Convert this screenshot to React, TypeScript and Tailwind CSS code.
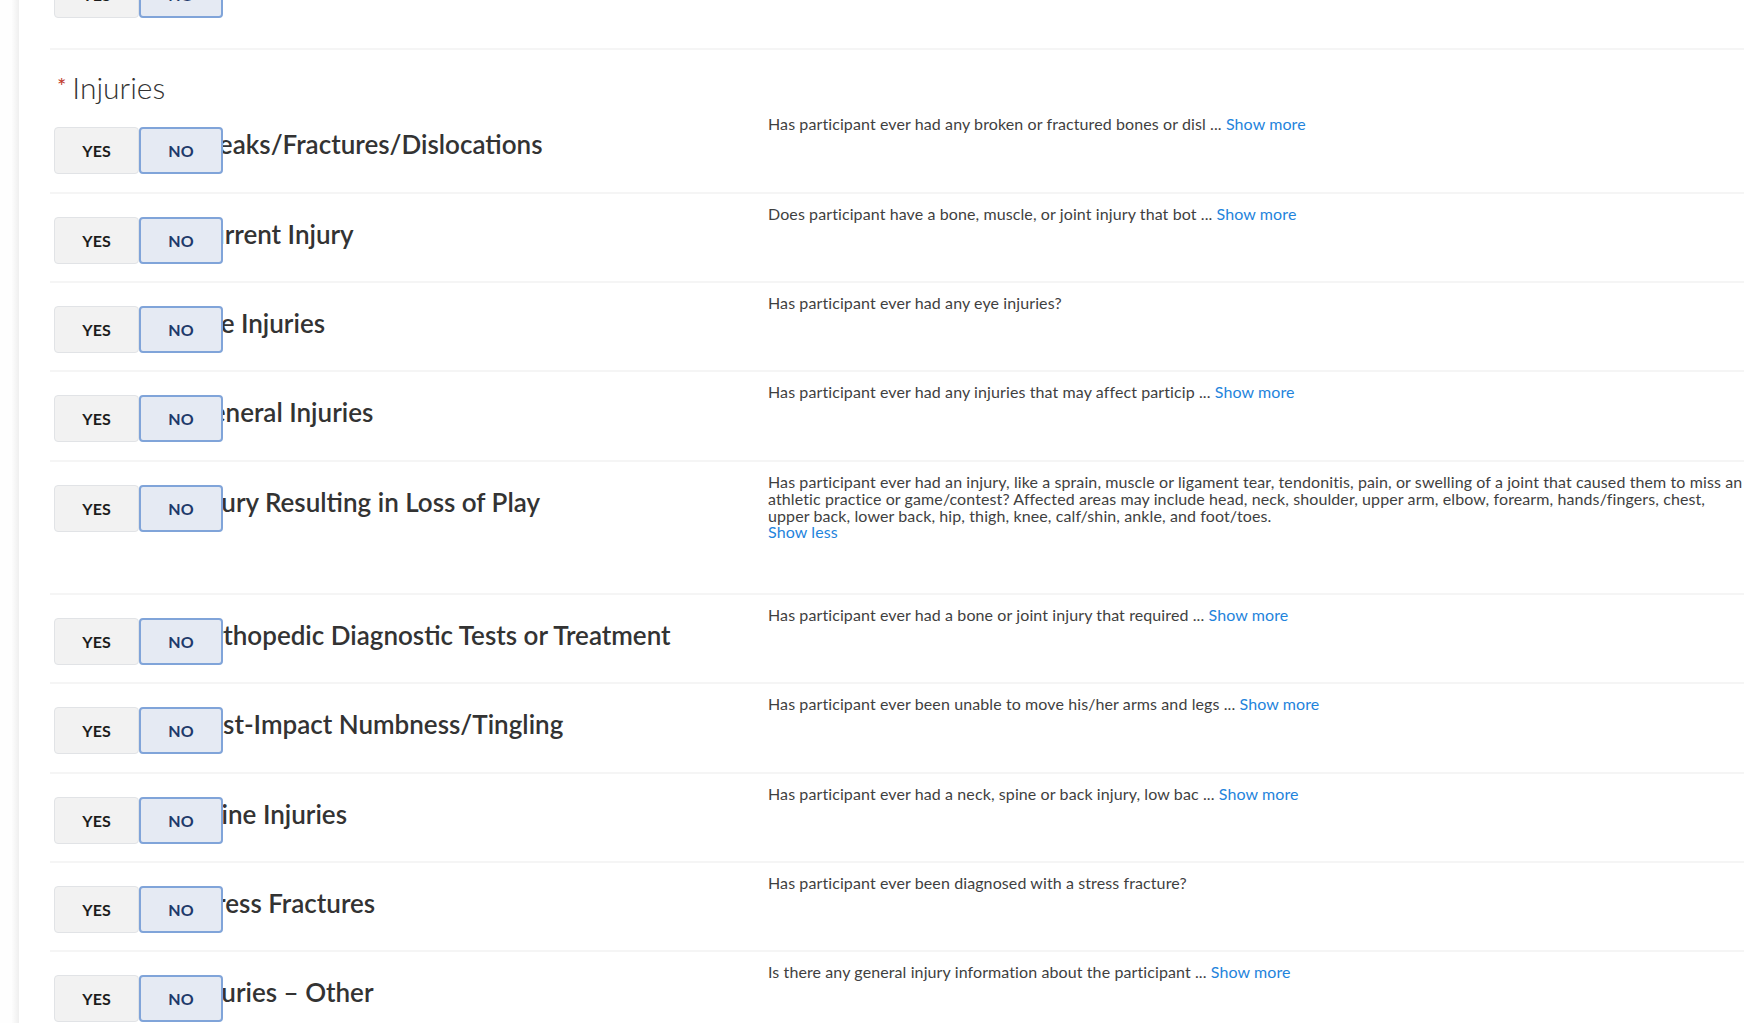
import React from 'react';

type Row = {
  title: string;
  text: string[];
  more?: 'more' | 'less';
  h: string;
};

const rows: Row[] = [
  { title: 'Breaks/Fractures/Dislocations', text: ['Has participant ever had any broken or fractured bones or disl'], more: 'more', h: 'h-[90px]' },
  { title: 'Current Injury', text: ['Does participant have a bone, muscle, or joint injury that bot'], more: 'more', h: 'h-[89px]' },
  { title: 'Eye Injuries', text: ['Has participant ever had any eye injuries?'], h: 'h-[89px]' },
  { title: 'General Injuries', text: ['Has participant ever had any injuries that may affect particip'], more: 'more', h: 'h-[90px]' },
  {
    title: 'Injury Resulting in Loss of Play',
    text: [
      'Has participant ever had an injury, like a sprain, muscle or ligament tear, tendonitis, pain, or swelling of a joint that caused them to miss an',
      'athletic practice or game/contest? Affected areas may include head, neck, shoulder, upper arm, elbow, forearm, hands/fingers, chest,',
      'upper back, lower back, hip, thigh, knee, calf/shin, ankle, and foot/toes.',
    ],
    more: 'less',
    h: 'h-[133px]',
  },
  { title: 'Orthopedic Diagnostic Tests or Treatment', text: ['Has participant ever had a bone or joint injury that required'], more: 'more', h: 'h-[89px]' },
  { title: 'Post-Impact Numbness/Tingling', text: ['Has participant ever been unable to move his/her arms and legs'], more: 'more', h: 'h-[90px]' },
  { title: 'Spine Injuries', text: ['Has participant ever had a neck, spine or back injury, low bac'], more: 'more', h: 'h-[89px]' },
  { title: 'Stress Fractures', text: ['Has participant ever been diagnosed with a stress fracture?'], h: 'h-[89px]' },
  { title: 'Injuries – Other', text: ['Is there any general injury information about the participant'], more: 'more', h: 'h-[89px]' },
];

function YesNo({ className }: { className: string }) {
  return (
    <div className={`absolute left-[4px] z-10 flex ${className}`}>
      <button className="flex h-[47px] w-[85px] items-center justify-center rounded-[4px] border border-[#e1e3e6] bg-[#f2f2f2] text-[16px] font-bold text-[#1c1c1c]">
        YES
      </button>
      <button className="flex h-[47px] w-[84px] items-center justify-center rounded-[4px] border-2 border-[#80a4d9] bg-[#e5eaf3] text-[16px] font-bold text-[#1e3a6b]">
        NO
      </button>
    </div>
  );
}

function QuestionRow({ row }: { row: Row }) {
  return (
    <div className={`relative flex border-b-2 border-[#f5f5f5] ${row.h}`}>
      <YesNo className="top-[23px]" />
      <div className="w-[718px] shrink-0 whitespace-nowrap pl-[143px] pt-[25px] text-[26px] font-semibold leading-[30px] text-[#333333]">
        {row.title}
      </div>
      <div className="flex-1 pt-[11px] text-[16px] leading-[17px] tracking-[0.1px] text-[#3f3f3f]">
        {row.more === 'less' ? (
          <>
            {row.text.map((line) => (
              <p key={line} className="whitespace-nowrap">
                {line}
              </p>
            ))}
            <a className="block leading-[16px] text-[#1f84dc]">Show less</a>
          </>
        ) : (
          <p>
            {row.text[0]}
            {row.more && (
              <>
                {' ... '}
                <a className="text-[#1f84dc]">Show more</a>
              </>
            )}
          </p>
        )}
      </div>
    </div>
  );
}

export default function App() {
  return (
    <div className="flex h-screen overflow-hidden bg-white font-[Lato,sans-serif]">
      <div className="w-[19px] shrink-0 bg-linear-to-r from-[#fefefe] from-60% to-[#efefef]" />
      <div className="flex-1 pl-[31px] pr-[4px]">
        <div className="relative h-[50px] border-b-2 border-[#f5f5f5]">
          <YesNo className="top-[-29px]" />
        </div>
        <div className="flex h-[54px] items-start pl-[7px] pt-[20px]">
          <span className="mt-[5px] text-[22px] leading-none text-[#c0392b]">*</span>
          <h2 className="ml-[6px] text-[30px] font-light leading-[34px] text-[#333333]">Injuries</h2>
        </div>
        {rows.map((row) => (
          <QuestionRow key={row.title} row={row} />
        ))}
      </div>
    </div>
  );
}
